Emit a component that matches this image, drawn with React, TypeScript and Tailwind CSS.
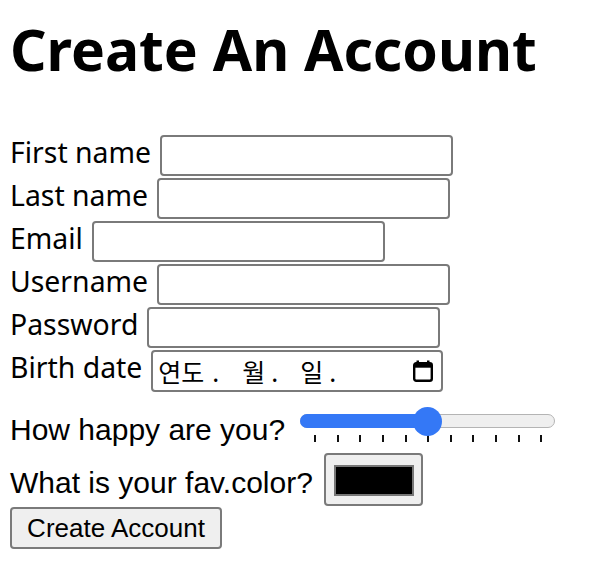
const fields = ['First name', 'Last name', 'Email', 'Username', 'Password']

const TICKS = Array.from({ length: 11 }, (_, i) => i)

function CalendarIcon() {
  return (
    <svg width="20" height="22" viewBox="0 0 20 22" className="shrink-0">
      <rect x="3.5" y="0.5" width="2.5" height="4" fill="#000" />
      <rect x="14" y="0.5" width="2.5" height="4" fill="#000" />
      <rect x="1.2" y="3.2" width="17.6" height="17.6" rx="2" fill="none" stroke="#000" strokeWidth="2.4" />
      <rect x="1.2" y="3.2" width="17.6" height="4.5" fill="#000" />
    </svg>
  )
}

function HappySlider({ value }: { value: number }) {
  const pct = value / 10
  return (
    <div className="relative ml-[13px] mt-[22px] w-[256px]">
      <div className="relative ml-[2px] h-[14px] w-[255px] rounded-full border-[1.5px] border-[#b4b4b4] bg-[#efefef]">
        <div
          className="absolute -left-[1.5px] -top-[1.5px] h-[14px] rounded-full bg-[#3478f6]"
          style={{ width: 14 + pct * 227 }}
        />
      </div>
      <div
        className="absolute top-[-7px] h-[29px] w-[29px] rounded-full bg-[#3478f6]"
        style={{ left: 2 + pct * 227 - 0.5 }}
      />
      <div className="mt-[7px] ml-[16px] flex w-[228px] justify-between">
        {TICKS.map((t) => (
          <span key={t} className="block h-[7px] w-[2px] bg-[#111]" />
        ))}
      </div>
    </div>
  )
}

export default function App() {
  return (
    <div className="min-h-[568px] bg-white pl-[10px] text-black [font-family:'Noto_Sans',sans-serif]">
      <h1 className="pt-[20px] text-[57px] font-bold leading-[58px]">Create An Account</h1>

      <form className="mt-[57px] flex flex-col" onSubmit={(e) => e.preventDefault()}>
        {fields.map((label) => (
          <label key={label} className="mb-[2px] flex h-[41px] items-start">
            <span className="pt-[3px] text-[28.4px] leading-[28px]">{label}</span>
            <input
              type="text"
              className="ml-[9px] h-[41px] w-[293px] rounded-[4px] border-2 border-[#7a7a7a] bg-white"
            />
          </label>
        ))}

        <label className="flex h-[42px] items-start">
          <span className="pt-[3px] text-[28.4px] leading-[28px]">Birth date</span>
          <div className="ml-[9px] flex h-[42px] w-[292px] items-center rounded-[4px] border-2 border-[#7a7a7a] pl-[5px] pr-[8.5px] text-[25px] leading-none [font-family:'Noto_Sans_CJK_KR',sans-serif]">
            <span className="w-[54px]">연도</span>
            <span className="w-[30px]">.</span>
            <span className="w-[29px]">월</span>
            <span className="w-[29px]">.</span>
            <span className="w-[29px]">일</span>
            <span>.</span>
            <span className="flex-1" />
            <CalendarIcon />
          </div>
        </label>

        <div className="flex h-[61px] items-start [font-family:'Liberation_Sans',Arial,sans-serif]">
          <span className="mt-[22.5px] text-[30px] leading-[30px]">How happy are you?</span>
          <HappySlider value={5} />
        </div>

        <div className="flex h-[54px] items-start [font-family:'Liberation_Sans',Arial,sans-serif]">
          <span className="mt-[14.5px] text-[30px] leading-[30px]">What is your fav.color?</span>
          <div className="ml-[11px] flex h-[53px] w-[99px] items-start rounded-[4px] border-2 border-[#7a7a7a] bg-[#efefef] pl-[8px] pt-[10px]">
            <div className="h-[31px] w-[80px] border-[2px] border-[#777] bg-black" />
          </div>
        </div>

        <div className="flex">
          <button
            type="submit"
            className="h-[42px] w-[212px] rounded-[4px] border-2 border-[#7a7a7a] bg-[#efefef] text-[26px] leading-none [font-family:'Liberation_Sans',Arial,sans-serif]"
          >
            Create Account
          </button>
        </div>
      </form>
    </div>
  )
}
